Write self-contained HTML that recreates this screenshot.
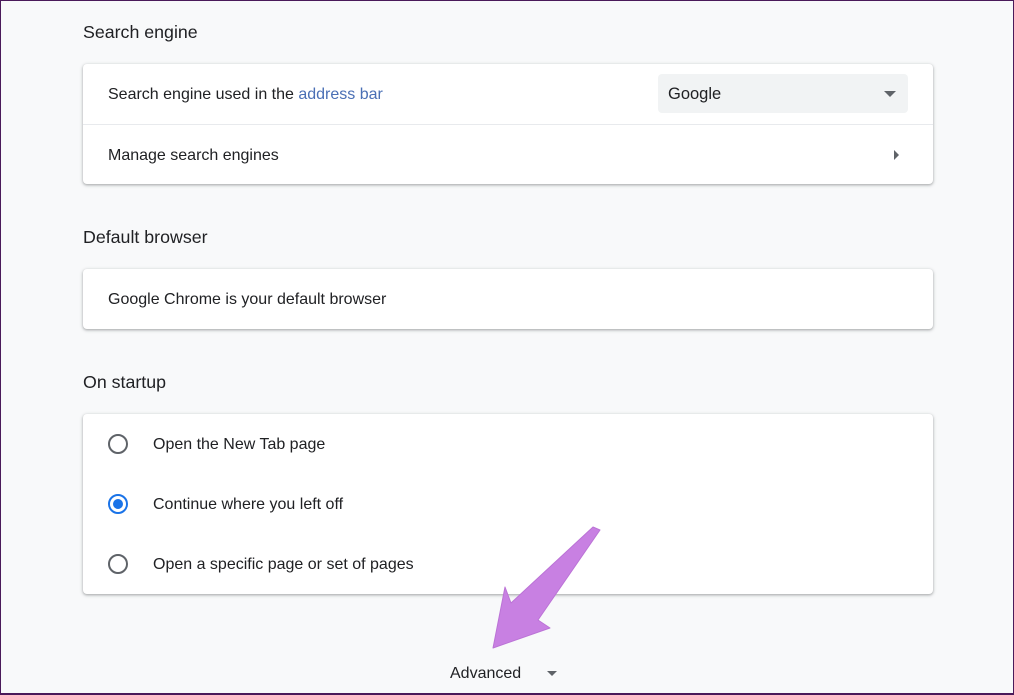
<!DOCTYPE html>
<html><head><meta charset="utf-8"><style>
*{box-sizing:border-box;margin:0;padding:0}
html,body{width:1014px;height:695px;overflow:hidden}
body{background:#f8f9fa;font-family:"Liberation Sans",Arial,sans-serif;color:#202124;position:relative}
.frame{position:absolute;left:0;top:0;width:1014px;height:695px;border:1px solid #4a1a5a;border-bottom-width:2px;pointer-events:none}
.h{position:absolute;left:83px;font-size:17.8px;color:#202124}
.card{position:absolute;left:83px;width:850px;background:#fff;border-radius:4px;box-shadow:0 1px 2px rgba(60,64,67,.3),0 1px 3px 1px rgba(60,64,67,.15)}
.row{position:relative;height:60px;display:flex;align-items:center;padding-left:25px;padding-top:2px;font-size:16px;color:#202124}
.sep{border-top:1px solid #e8eaed}
.radio{position:absolute;left:25px;top:20px;width:20px;height:20px;border:2px solid #5f6368;border-radius:50%}
.radio.on{border-color:#1a73e8}
.radio.on::after{content:"";position:absolute;left:3px;top:3px;width:10px;height:10px;border-radius:50%;background:#1a73e8}
.rl{padding-left:70px}
</style></head><body>
<div class="h" style="top:22px">Search engine</div>
<div class="card" style="top:64px;height:120px">
 <div class="row">Search engine used in the&nbsp;<span style="color:#4a6fb5">address bar</span>
  <div style="position:absolute;left:575px;top:10px;width:250px;height:39px;background:#f1f3f4;border-radius:4px;padding-left:10px;padding-top:1px;line-height:39px;font-size:16.5px">Google
   <div style="position:absolute;right:12px;top:17px;width:0;height:0;border-left:6px solid transparent;border-right:6px solid transparent;border-top:6px solid #5f6368"></div></div>
 </div>
 <div class="row sep">Manage search engines
  <div style="position:absolute;right:34px;top:25px;width:0;height:0;border-top:5px solid transparent;border-bottom:5px solid transparent;border-left:5px solid #5f6368"></div></div>
</div>
<div class="h" style="top:227px">Default browser</div>
<div class="card" style="top:269px;height:60px"><div class="row">Google Chrome is your default browser</div></div>
<div class="h" style="top:372px">On startup</div>
<div class="card" style="top:414px;height:180px">
 <div class="row rl"><div class="radio"></div>Open the New Tab page</div>
 <div class="row rl"><div class="radio on"></div>Continue where you left off</div>
 <div class="row rl"><div class="radio"></div>Open a specific page or set of pages</div>
</div>
<div style="position:absolute;left:450px;top:665px;font-size:16px;color:#202124">Advanced</div>
<div style="position:absolute;left:547px;top:671px;width:0;height:0;border-left:5px solid transparent;border-right:5px solid transparent;border-top:5px solid #5f6368"></div>
<svg style="position:absolute;left:0;top:0" width="1014" height="695">
<polygon points="493,648 505,587 511,603 593,527 600,530 538,620 550,628" fill="#c880e2" stroke="#bb73d6" stroke-width="1" stroke-linejoin="round"/>
</svg>
<div class="frame"></div>
</body></html>
